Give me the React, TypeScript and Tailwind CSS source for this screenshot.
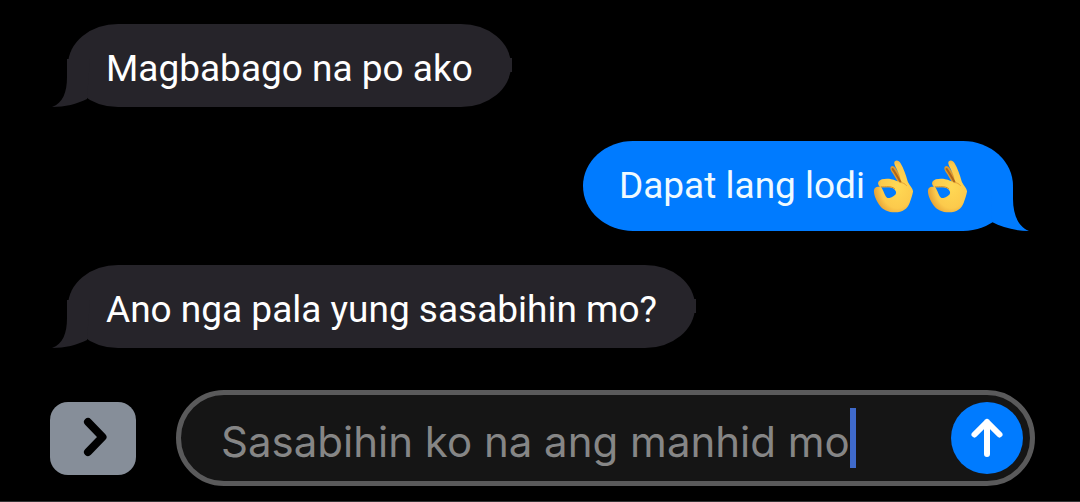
import { useId } from "react";
import type { ReactNode } from "react";

function OkHand() {
  const id = useId();
  return (
    <svg viewBox="0 0 122 160" className="h-[53px] w-[41px] shrink-0" role="img" aria-label="OK hand">
      <defs>
        <radialGradient id={id} cx="0.6" cy="0.5" r="0.6">
          <stop offset="0" stopColor="#ffd954" />
          <stop offset="0.7" stopColor="#fcca4c" />
          <stop offset="1" stopColor="#e6a236" />
        </radialGradient>
      </defs>
      <path
        d="M53 20 C58 16 65 20 68 26 L96 68 L80 76 L60 42 C54 33 49 26 53 20Z"
        fill="#dd9a30"
      />
      <path
        d="M65 4 C70 -1 78 2 82 9 C92 26 98 44 103 62 C107 76 119 83 120 95 C118 108 113 119 110 129 C104 147 88 158 66 158 C44 158 29 150 20 138 C11 126 1 106 2 92 C3 82 12 79 20 82 C16 78 12 71 16 65 C22 56 42 56 54 58 C65 60 73 64 82 68 C84 54 77 40 69 24 C65 16 61 9 65 4Z"
        fill={`url(#${id})`}
      />
      <path
        d="M24 82 C36 84 49 80 59 85 C69 91 71 98 67 104 C61 111 50 115 43 115 C35 110 31 91 24 82Z"
        fill="#007bff"
      />
      <path d="M58 27 C66 38 74 52 82 66" fill="none" stroke="#ad661c" strokeWidth="6" strokeLinecap="round" />
      <path d="M24 81 C38 82 52 77 64 86" fill="none" stroke="#d48c28" strokeWidth="3" strokeLinecap="round" />
      <path d="M82 68 C90 68 96 72 100 77" fill="none" stroke="#e2a035" strokeWidth="3" strokeLinecap="round" />
    </svg>
  );
}

function Received({ children }: { children: ReactNode }) {
  return (
    <li className="relative h-[83px] self-start rounded-[50px/41px] bg-[#26242a] px-[38px] text-[37px] leading-[90px] whitespace-nowrap text-white">
      <svg viewBox="0 0 38 48" className="absolute bottom-0 -left-4 h-12 w-[38px]" aria-hidden="true">
        <path d="M15 0 V18 C15 33 11 44 0 48 C13 48 25 45 35 40 L38 0 Z" fill="#26242a" />
      </svg>
      <span className="absolute top-[34px] -right-px h-3.5 w-1 bg-[#26242a]" />
      <span className="relative">{children}</span>
    </li>
  );
}

export default function App() {
  return (
    <main className="flex min-h-screen flex-col justify-between border-b border-[#343436] bg-black font-['Roboto','Liberation_Sans',sans-serif]">
      <ul className="flex flex-col gap-[34px] pt-6 pr-[67px] pl-[68px]">
        <Received>Magbabago na po ako</Received>
        <li className="relative flex h-[90px] items-center self-end rounded-[50px/45px] bg-[#007bff] pr-[45px] pl-9 text-[37px] leading-[90px] whitespace-nowrap text-[#effaff]">
          <svg viewBox="0 0 38 44" className="absolute -right-4 bottom-0 h-11 w-[38px]" aria-hidden="true">
            <path d="M22 0 V12 C22 27 27 40 38 44 C24 44 11 40 1 35 L0 0 Z" fill="#007bff" />
          </svg>
          <span className="relative">Dapat lang lodi</span>
          <span className="relative ml-2 flex gap-[13px]">
            <OkHand />
            <OkHand />
          </span>
        </li>
        <Received>Ano nga pala yung sasabihin mo?</Received>
      </ul>
      <form className="flex items-center gap-10 pr-[45px] pb-[15px] pl-[50px]" onSubmit={(e) => e.preventDefault()}>
        <button
          type="button"
          aria-label="Show apps"
          className="flex h-[73px] w-[86px] shrink-0 items-center justify-center rounded-[18px] bg-[#868e99]"
        >
          <svg viewBox="0 0 86 73" className="h-full w-full" fill="none" stroke="#000" strokeWidth="8" strokeLinecap="round" strokeLinejoin="round">
            <path d="M38 20 L52.5 35 L38 50" />
          </svg>
        </button>
        <div className="flex h-24 min-w-0 flex-1 items-center rounded-full border-5 border-[#5a5a5b] bg-[#151515] pr-[7px] pl-10">
          <input
            type="text"
            aria-label="Message"
            defaultValue="Sasabihin ko na ang manhid mo"
            className="min-w-0 [field-sizing:content] bg-transparent pt-2 font-['Inter','Liberation_Sans',sans-serif] text-[42px] leading-[60px] text-[#868686] outline-none"
          />
          <span className="h-[60px] w-1.5 shrink-0 bg-[#3f6acb]" />
          <button
            type="submit"
            aria-label="Send"
            className="ml-auto size-[72px] shrink-0 rounded-full bg-[#007bff]"
          >
            <svg viewBox="0 0 72 72" className="size-full" fill="none" stroke="#fff" strokeWidth="6" strokeLinecap="round" strokeLinejoin="round">
              <path d="M36 52 V20 M23.5 32.5 L36 20 L48.5 32.5" />
            </svg>
          </button>
        </div>
      </form>
    </main>
  );
}
